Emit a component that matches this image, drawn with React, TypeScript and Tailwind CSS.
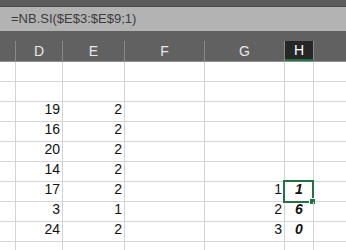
const cols = [
  { key: "C", w: "w-[16px]" },
  { key: "D", w: "w-[47px]" },
  { key: "E", w: "w-[62px]" },
  { key: "F", w: "w-[80px]" },
  { key: "G", w: "w-[80px]" },
  { key: "H", w: "w-[29px]" },
  { key: "I", w: "flex-1" },
];

type Row = { d?: string; e?: string; g?: string; h?: string; sel?: boolean };

const rows: Row[] = [
  {},
  {},
  { d: "19", e: "2" },
  { d: "16", e: "2" },
  { d: "20", e: "2" },
  { d: "14", e: "2" },
  { d: "17", e: "2", g: "1", h: "1", sel: true },
  { d: "3", e: "1", g: "2", h: "6" },
  { d: "24", e: "2", g: "3", h: "0" },
  {},
];

export default function App() {
  return (
    <div className="w-[346px] h-[250px] overflow-hidden bg-white font-['Liberation_Sans',Arial,sans-serif]">
      <div className="h-[7px] bg-[#5b5b5b] border-b border-[#4a4a4a]" />
      <div className="h-[24px] bg-[#b3b3b3] flex items-center pl-[11px] text-[13px] text-[#3c3c3c]">
        =NB.SI($E$3:$E$9;1)
      </div>
      <div className="h-[10px] bg-[#616161]" />
      <div className="h-[21px] bg-[#616161] flex border-b border-[#8e8e8e]">
        {cols.map((c) => (
          <div
            key={c.key}
            className={`${c.w} shrink-0 flex items-center justify-center text-[14px] border-r border-[#8a8a8a] ${
              c.key === "H" ? "bg-[#262626] text-white border-b-2 border-b-[#217346]" : "text-[#e8e8e8]"
            } ${c.key === "I" ? "border-r-0" : ""}`}
          >
            {c.key === "C" || c.key === "I" ? "" : c.key}
          </div>
        ))}
      </div>
      {rows.map((r, i) => (
        <div key={i} className="h-[20px] flex text-[14px] text-[#111]">
          <div className="w-[16px] shrink-0 border-r border-b border-[#d4d4d4]" />
          <div className="w-[47px] shrink-0 border-r border-b border-[#d4d4d4] flex items-end justify-end pr-[2px] pb-[1px]">
            {r.d}
          </div>
          <div className="w-[62px] shrink-0 border-r border-b border-[#d4d4d4] flex items-end justify-end pr-[2px] pb-[1px]">
            {r.e}
          </div>
          <div className="w-[80px] shrink-0 border-r border-b border-[#d4d4d4]" />
          <div className="w-[80px] shrink-0 border-r border-b border-[#d4d4d4] flex items-end justify-end pr-[2px] pb-[1px]">
            {r.g}
          </div>
          <div className="relative w-[29px] shrink-0 border-r border-b border-[#d4d4d4] flex items-end justify-center pb-[1px] font-bold italic">
            {r.h}
            {r.sel && (
              <div className="absolute -left-[2px] -right-[1px] -top-[2px] -bottom-[2px] border-2 border-[#217346]">
                <div className="absolute -right-[4px] -bottom-[4px] w-[7px] h-[7px] bg-[#217346] border border-white" />
              </div>
            )}
          </div>
          <div className="flex-1 border-b border-[#d4d4d4]" />
        </div>
      ))}
    </div>
  );
}
